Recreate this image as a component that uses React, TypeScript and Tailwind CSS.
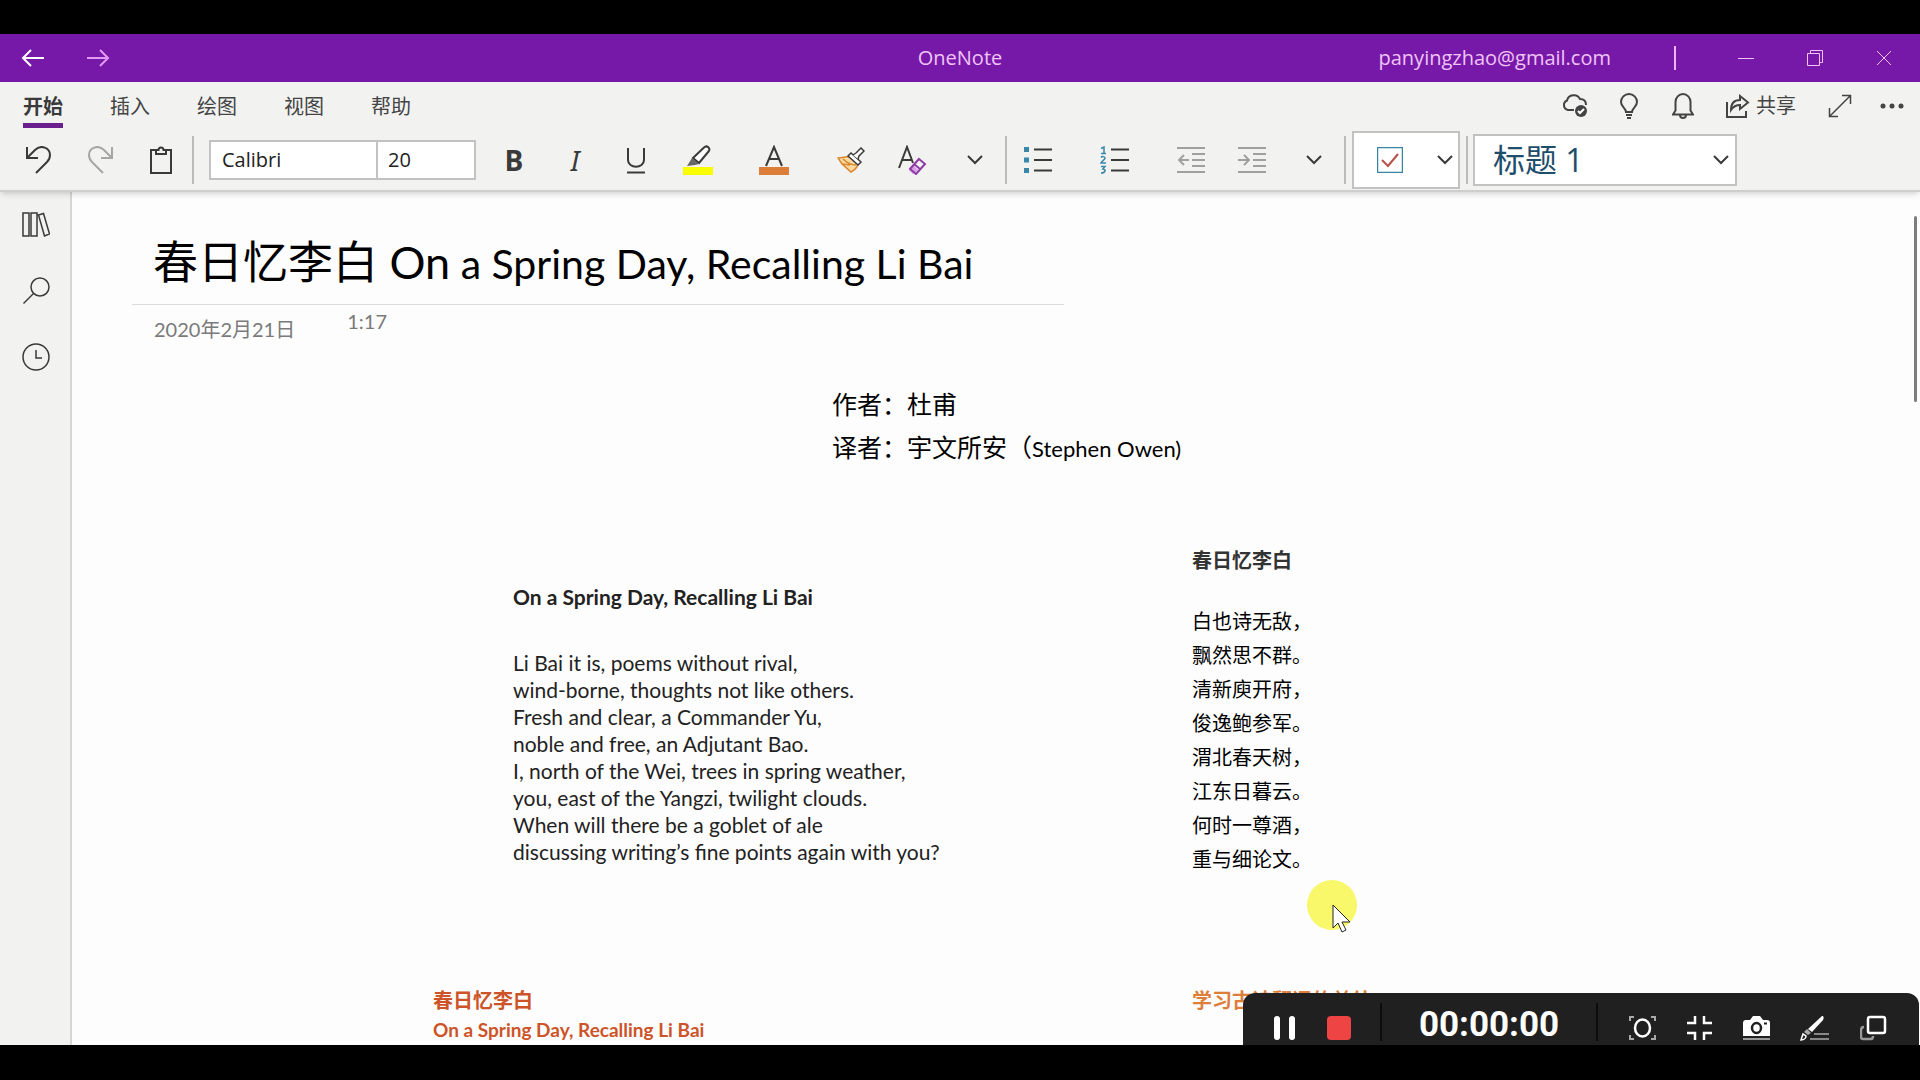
import type { ReactNode } from 'react'

const tabs = ['开始', '插入', '绘图', '视图', '帮助']

const englishPoem = [
  'Li Bai it is, poems without rival,',
  'wind-borne, thoughts not like others.',
  'Fresh and clear, a Commander Yu,',
  'noble and free, an Adjutant Bao.',
  'I, north of the Wei, trees in spring weather,',
  'you, east of the Yangzi, twilight clouds.',
  'When will there be a goblet of ale',
  'discussing writing’s fine points again with you?',
]

const chinesePoem = [
  '白也诗无敌，',
  '飘然思不群。',
  '清新庾开府，',
  '俊逸鲍参军。',
  '渭北春天树，',
  '江东日暮云。',
  '何时一尊酒，',
  '重与细论文。',
]

interface IconButtonProps {
  label: string
  className?: string
  children: ReactNode
}

function IconButton({ label, className = '', children }: IconButtonProps) {
  return (
    <button aria-label={label} className={`flex shrink-0 items-center justify-center ${className}`}>
      {children}
    </button>
  )
}

interface IconProps {
  className?: string
  width?: number
  height?: number
  strokeWidth?: number
  children: ReactNode
}

function Icon({ className = '', width = 28, height = 28, strokeWidth = 2, children }: IconProps) {
  return (
    <svg
      width={width}
      height={height}
      viewBox={`0 0 ${width} ${height}`}
      fill="none"
      stroke="currentColor"
      strokeWidth={strokeWidth}
      className={`shrink-0 ${className}`}
      aria-hidden="true"
    >
      {children}
    </svg>
  )
}

function Chevron() {
  return (
    <Icon width={16} height={10}>
      <path d="M1 1l7 7 7-7" />
    </Icon>
  )
}

function Divider() {
  return <div className="h-12 w-[2px] shrink-0 bg-[#bcbcbc]" />
}

function TitleBar() {
  return (
    <header className="grid h-12 shrink-0 grid-cols-3 items-center bg-[#7719a8] text-xl text-[#f0c4f8]">
      <div className="flex items-center gap-[42px] pl-[21px]">
        <IconButton label="后退" className="text-white">
          <Icon width={24} height={18}>
            <path d="M23 9H2M10 1L2 9l8 8" />
          </Icon>
        </IconButton>
        <IconButton label="前进" className="text-[#e09af5]">
          <Icon width={24} height={18}>
            <path d="M0 9h21M13 1l8 8-8 8" />
          </Icon>
        </IconButton>
      </div>
      <h1 className="text-center">OneNote</h1>
      <div className="flex items-center justify-end pr-7">
        <span>panyingzhao@gmail.com</span>
        <div className="mr-[62px] ml-[63px] h-6 w-[2px] bg-[#f0b4fa]" />
        <div className="flex items-center gap-[53px]">
          <IconButton label="最小化">
            <Icon width={16} height={16} strokeWidth={1}>
              <path d="M0 8.500h16" />
            </Icon>
          </IconButton>
          <IconButton label="还原">
            <Icon width={16} height={16} strokeWidth={1}>
              <path d="M.5 3.500h12v12H.5zM3.500 3.500v-3h12v12h-3" />
            </Icon>
          </IconButton>
          <IconButton label="关闭">
            <Icon width={16} height={16} strokeWidth={1}>
              <path d="M1 1l14 14M15 1L1 15" />
            </Icon>
          </IconButton>
        </div>
      </div>
    </header>
  )
}

function TabRow() {
  return (
    <div className="flex h-[46px] items-stretch justify-between pr-4 pl-[23px]">
      <nav className="flex gap-[47px] text-xl leading-6">
        {tabs.map((tab, i) => (
          <button
            key={tab}
            className={`border-b-[5px] pt-2 ${
              i === 0 ? 'border-[#6b1f8f] font-bold text-[#3a3a3a]' : 'border-transparent text-[#444444]'
            }`}
          >
            {tab}
          </button>
        ))}
      </nav>
      <div className="flex items-center pt-[2px] text-[#444444]">
        <IconButton label="同步" className="mr-8">
          <Icon width={26} height={26}>
            <path d="M12 17H6a5 5 0 0 1-1-9.500 7 7 0 0 1 13-1.500c4 0 6 2.500 6 6" />
            <circle cx="19" cy="18" r="6" fill="currentColor" stroke="none" />
            <path d="M16 18l2 2 4-4" stroke="#fff" />
          </Icon>
        </IconButton>
        <IconButton label="提示" className="mr-[34px]">
          <Icon width={18} height={26}>
            <path d="M6 19c0-4-5-5-5-10a8 8 0 0 1 16 0c0 5-5 6-5 10zM6 22h6M7 25h4" />
          </Icon>
        </IconButton>
        <IconButton label="通知" className="mr-8">
          <Icon width={22} height={26}>
            <path d="M1 21.500h20l-2.500-4V9a7.500 8 0 0 0-15 0v8.500zM8 22a3 3 0 0 0 6 0" />
          </Icon>
        </IconButton>
        <button className="mr-8 flex items-center gap-[6px] text-xl">
          <Icon width={24} height={24}>
            <path d="M1 8v15h19v-6" />
            <path d="M14 2l8 6.500-8 6.500v-4c-5 0-7 2-9 5 0-6 3-10 9-10z" />
          </Icon>
          共享
        </button>
        <IconButton label="全屏" className="mr-7">
          <Icon width={24} height={24} strokeWidth={1.5}>
            <path d="M2 22L22 2M14 1.500h8.500V10M1.500 14v8.500H10" />
          </Icon>
        </IconButton>
        <IconButton label="更多">
          <Icon width={24} height={6}>
            <g fill="currentColor" stroke="none">
              <circle cx="3" cy="3" r="2.500" />
              <circle cx="12" cy="3" r="2.500" />
              <circle cx="21" cy="3" r="2.500" />
            </g>
          </Icon>
        </IconButton>
      </div>
    </div>
  )
}

function Toolbar() {
  return (
    <div className="flex h-[62px] items-center pt-[2px] pl-[25px] text-[#3a3a3a]">
      <IconButton label="撤消" className="mr-[34px]">
        <Icon>
          <path d="M2 1v11h11M2 12L10 4c6-6 15-2 15 5 0 3-1 5-3 7L11 27" />
        </Icon>
      </IconButton>
      <IconButton label="恢复" className="mr-[34px] text-[#a6a6a6]">
        <Icon>
          <path d="M25 1v11H14M25 12L17 4C11-2 2 2 2 9c0 3 1 5 3 7l11 11" />
        </Icon>
      </IconButton>
      <IconButton label="粘贴" className="mr-[19px]">
        <Icon width={24} height={28}>
          <path d="M7 4H2v23h20V4h-5" />
          <path d="M7 8V4h2.500a2.500 2.500 0 0 1 5 0H17v4z" />
        </Icon>
      </IconButton>
      <Divider />
      <div className="mr-7 ml-[15px] flex h-10 w-[267px] shrink-0 border-2 border-[#c2c2c2] bg-white text-xl text-[#222222]">
        <input aria-label="字体" defaultValue="Calibri" className="w-[167px] border-r-2 border-[#c2c2c2] pl-[11px] outline-none" />
        <input aria-label="字号" defaultValue="20" className="w-24 pl-[10px] outline-none" />
      </div>
      <button aria-label="加粗" className="w-5 text-[28px] leading-8 font-bold">
        B
      </button>
      <button aria-label="倾斜" className="ml-[41px] w-5 font-[Noto_Sans] text-[28px] leading-8 italic">
        I
      </button>
      <IconButton label="下划线" className="ml-[39px]">
        <Icon width={24} height={28}>
          <path d="M4 2v12c0 9 16 9 16 0V2M3 26.500h18" />
        </Icon>
      </IconButton>
      <IconButton label="突出显示" className="ml-[34px]">
        <Icon width={32} height={30}>
          <path d="M1 22h30v8H1z" fill="#faff00" stroke="none" />
          <path d="M11 13L22 2.500c3-3 7 1 4.500 4L17 18z" fill="#fff" />
          <path d="M10 13l7 6-4 1-8 1z" fill="#666" stroke="none" />
        </Icon>
      </IconButton>
      <IconButton label="字体颜色" className="ml-11">
        <Icon width={32} height={30}>
          <path d="M1 22h30v8H1z" fill="#dc7d3a" stroke="none" />
          <path d="M8 21l8-19 8 19M11 14h10" />
        </Icon>
      </IconButton>
      <IconButton label="格式刷" className="ml-[47px]">
        <Icon width={28} height={26} strokeWidth={1.5}>
          <path d="M12 9.500L1 11l4 6 9 8c4-2 6-4 7-8z" fill="#fcd9a0" stroke="#d9862c" />
          <path d="M6 12c4 4 9 6 13 6M5 17l8 1" stroke="#d9862c" />
          <path d="M11 9l3-3 10 9-3 3z" fill="#fff" />
          <path d="M16 8l3-2 5-5 3 3-5 5-1 3" fill="#fff" />
        </Icon>
      </IconButton>
      <IconButton label="清除格式" className="ml-8">
        <Icon width={30} height={30}>
          <path d="M2 23L10 2l6 16M5 15h10" />
          <path d="M19 25l-5-5-4 5 4 4z" transform="translate(2 0)" fill="#dc9be8" stroke="none" />
          <path d="M22 14l6 5-9 10-6-5zM17 19l6 5" stroke="#8f3ba6" />
        </Icon>
      </IconButton>
      <IconButton label="更多字体选项" className="mr-[22px] ml-10">
        <Chevron />
      </IconButton>
      <Divider />
      <IconButton label="项目符号" className="ml-[17px]">
        <Icon>
          <path d="M0 1h5v5H0zM0 11.500h5v5H0zM0 22h5v5H0z" fill="#3a86a8" stroke="none" />
          <path d="M10 3.500h18M10 14h18M10 24.500h18" />
        </Icon>
      </IconButton>
      <IconButton label="编号" className="ml-12">
        <Icon width={30}>
          <g stroke="#3a86a8" strokeWidth="1.500">
            <path d="M1 2.500L4 1v7M1 7.500h5" />
            <path d="M1 11.500c1-1.500 4-1 4 .5 0 1.500-2 2-4 5h5" />
            <path d="M1 20.500h4l-2 2.500c3 0 3 4-2 4" />
          </g>
          <path d="M11 3.500h18M11 14h18M11 24.500h18" />
        </Icon>
      </IconButton>
      <IconButton label="减少缩进" className="ml-[47px] text-[#a0a0a0]">
        <Icon>
          <path d="M0 2h28M15 8h13M15 14h13M15 20h13M0 26h28M12 14H2M7 9l-5 5 5 5" />
        </Icon>
      </IconButton>
      <IconButton label="增加缩进" className="ml-[33px] text-[#a0a0a0]">
        <Icon>
          <path d="M0 2h28M15 8h13M15 14h13M15 20h13M0 26h28M0 14h11M6 9l5 5-5 5" />
        </Icon>
      </IconButton>
      <IconButton label="更多段落选项" className="mr-[22px] ml-10">
        <Chevron />
      </IconButton>
      <Divider />
      <div className="mx-[6px] flex h-[58px] w-[108px] shrink-0 items-center justify-between border-2 border-[#c2c2c2] bg-white pr-[5px] pl-[23px]">
        <IconButton label="待办事项">
          <Icon width={26} height={26}>
            <path d="M.5.5h25v25H.5z" stroke="#3a86a8" strokeWidth="1.500" />
            <path d="M5 13l6 6 10-12" stroke="#b8504a" />
          </Icon>
        </IconButton>
        <IconButton label="更多标记">
          <Chevron />
        </IconButton>
      </div>
      <Divider />
      <div className="ml-[5px] grid h-[52px] w-[264px] shrink-0 items-center border-2 border-[#c2c2c2] bg-white">
        <select
          aria-label="样式"
          className="col-start-1 row-start-1 h-full appearance-none pl-[18px] text-[32px] leading-10 text-[#1f4e6b] outline-none"
        >
          <option>标题 1</option>
        </select>
        <span className="pointer-events-none col-start-1 row-start-1 mr-[6px] justify-self-end">
          <Chevron />
        </span>
      </div>
    </div>
  )
}

function Sidebar() {
  return (
    <aside className="flex w-[72px] shrink-0 flex-col items-center gap-[38px] border-r-2 border-[#d6d6d6] bg-[#f2f2f1] pt-[19px] pl-[2px] text-[#3a3a3a]">
      <IconButton label="笔记本">
        <Icon strokeWidth={1.5}>
          <path d="M1 2h6v23H1zM9 2h6v23H9zM16.500 4l5-1.500L27.500 23l-5 2z" />
        </Icon>
      </IconButton>
      <IconButton label="搜索">
        <Icon strokeWidth={1.5}>
          <circle cx="18" cy="10" r="9" />
          <path d="M11.500 16.500L1.500 26.500" />
        </Icon>
      </IconButton>
      <IconButton label="最近的笔记">
        <Icon strokeWidth={1.5}>
          <circle cx="14" cy="14" r="13" />
          <path d="M14 7v8h6" />
        </Icon>
      </IconButton>
    </aside>
  )
}

function NotePage() {
  return (
    <main className="flex min-w-0 flex-1 justify-between overflow-hidden bg-[#fdfdfd] font-[Lato,'Noto_Sans_CJK_SC',sans-serif] text-[#222222]">
      <div className="min-w-0 flex-1">
        <section className="ml-[60px] w-[932px]">
          <h2 className="h-[113px] border-b border-[#dcdcdc] pt-[34px] pl-[21px] text-[41px] leading-[72px] whitespace-nowrap text-black">
            <span className="text-[45px]">春日忆李白 On</span> a Spring Day, Recalling Li Bai
          </h2>
          <div className="flex gap-[52px] pl-[22px] text-xl leading-8 text-[#7a7a7a]">
            <span className="pt-2">2020年2月21日</span>
            <span>1:17</span>
          </div>
        </section>

        <section className="mt-[38px] ml-[760px] text-[25px] leading-[43px] text-black">
          <p>作者：杜甫</p>
          <p>
            译者：宇文所安（<span className="text-[22px]">Stephen Owen)</span>
          </p>
        </section>

        <section className="mt-[73px] ml-[441px] flex items-start">
          <article className="w-[679px] pt-10 text-[21px] leading-[27px]">
            <h3 className="mb-[39px] font-bold">On a Spring Day, Recalling Li Bai</h3>
            {englishPoem.map((line) => (
              <p key={line}>{line}</p>
            ))}
          </article>
          <article className="text-xl leading-[34px] text-black">
            <h3 className="mb-[27px] font-bold text-[#333333]">春日忆李白</h3>
            {chinesePoem.map((line) => (
              <p key={line}>{line}</p>
            ))}
          </article>
        </section>

        <section className="mt-[109px] ml-[361px] flex items-start text-xl leading-[30px] font-bold">
          <article className="w-[759px] text-[#cd5428]">
            <h3>春日忆李白</h3>
            <p className="text-[19px]">On a Spring Day, Recalling Li Bai</p>
          </article>
          <h3 className="text-[#dd7f3b]">学习古诗翻译的益处</h3>
        </section>
      </div>
      <div className="mt-6 mr-[3px] h-[186px] w-[3px] shrink-0 rounded-full bg-[#7d7d7d]" />
    </main>
  )
}

function PointerSpot() {
  return (
    <div className="pointer-events-none absolute top-[846px] left-[1307px]">
      <svg width="52" height="56" viewBox="0 0 52 56" aria-hidden="true">
        <circle cx="25" cy="25" r="25" fill="#f8f86a" />
        <path d="M26 25v23l5-5 4 9 4-2-4-8h8z" fill="#fff" stroke="#222" strokeWidth="1" />
      </svg>
    </div>
  )
}

function Recorder() {
  return (
    <div className="absolute right-px bottom-0 flex h-[52px] w-[676px] items-end rounded-t-xl bg-[#202020] pb-1 text-white">
      <IconButton label="暂停" className="ml-[30px] h-[26px]">
        <Icon width={24} height={26} className="fill-white stroke-none">
          <rect x="1" y="1" width="6" height="24" rx="3" />
          <rect x="16" y="1" width="6" height="24" rx="3" />
        </Icon>
      </IconButton>
      <IconButton label="停止" className="ml-[30px] h-[26px]">
        <Icon width={24} height={26}>
          <rect y="1" width="24" height="24" rx="4" fill="#ef4444" stroke="none" />
        </Icon>
      </IconButton>
      <div className="ml-[29px] h-[38px] w-[2px] bg-[#0c0c0c]" />
      <time className="w-[214px] text-center font-[Roboto,'Liberation_Sans',sans-serif] text-[35px] leading-8 font-bold">
        00:00:00
      </time>
      <div className="h-[38px] w-[2px] bg-[#0c0c0c]" />
      <div className="ml-[31px] flex items-center gap-[30px]">
        <IconButton label="区域">
          <Icon width={27} height={26}>
            <ellipse cx="13.500" cy="13" rx="7.500" ry="8.500" strokeWidth="2.500" />
            <path d="M1 6V2h4M22 2h4v4M26 20v4h-4M5 24H1v-4" stroke="#aaa" />
          </Icon>
        </IconButton>
        <IconButton label="退出全屏">
          <Icon width={27} height={26} strokeWidth={2.5}>
            <path d="M9 1v7H1M18 1v7h8M9 25v-7H1M18 25v-7h8" />
          </Icon>
        </IconButton>
        <IconButton label="截图">
          <Icon width={27} height={26}>
            <path d="M3 5h4l3-4h7l3 4h4q3 0 3 3v13H0V8q0-3 3-3z" fill="#fff" stroke="none" />
            <ellipse cx="13.500" cy="13" rx="4.500" ry="5" stroke="#202020" strokeWidth="2.500" />
            <path d="M21 8.500h3" stroke="#202020" />
            <path d="M0 24h27" stroke="#999" />
          </Icon>
        </IconButton>
        <IconButton label="画笔">
          <Icon width={30} height={26}>
            <path d="M22 1c2 0 2 2 1 4L12 17l-4-3z" fill="#fff" stroke="none" />
            <path d="M7 14l4 4-3 2-4-3z" fill="#aaa" stroke="none" />
            <path d="M1 25l2-6 3 2c0 2-2 4-5 4z" strokeWidth="1.500" />
            <path d="M14 19h15M10 24h19" stroke="#888" />
          </Icon>
        </IconButton>
        <IconButton label="小窗口">
          <Icon width={27} height={26} strokeWidth={2.5}>
            <rect x="8" y="2" width="17" height="16" rx="2" />
            <path d="M4 12q-3 0-3 3v7q0 2 2 2h8q2 0 2-3" stroke="#999" />
          </Icon>
        </IconButton>
      </div>
    </div>
  )
}

export default function App() {
  return (
    <div className="h-screen bg-black pt-[34px] pb-[35px] font-['Open_Sans','Noto_Sans_CJK_SC',sans-serif]">
      <div className="relative flex h-full flex-col overflow-hidden">
        <TitleBar />
        <div className="z-10 shrink-0 border-b-2 border-[#cecece] bg-[#f2f2f1] shadow-md">
          <TabRow />
          <Toolbar />
        </div>
        <div className="flex min-h-0 flex-1">
          <Sidebar />
          <NotePage />
        </div>
        <PointerSpot />
        <Recorder />
      </div>
    </div>
  )
}
